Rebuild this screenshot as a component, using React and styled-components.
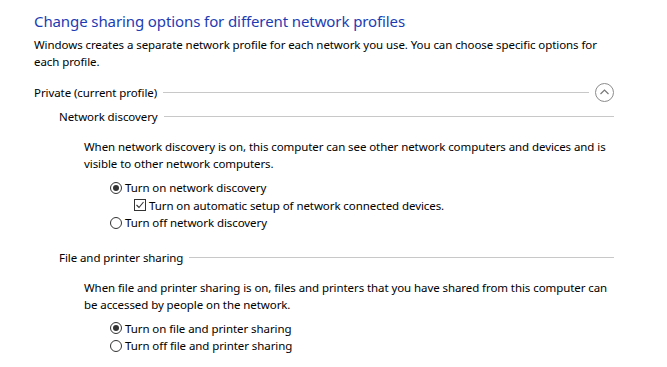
import React from "react";
import styled, { createGlobalStyle } from "styled-components";

const GlobalStyle = createGlobalStyle`
  html, body {
    margin: 0;
    padding: 0;
    background: #fff;
  }
  body {
    font-family: "Noto Sans", "Open Sans", sans-serif;
    font-size: 11.5px;
    letter-spacing: -0.08px;
    color: #000;
  }
`;

const Page = styled.div`
  width: 580px;
  padding: 10px 0 0 34px;
`;

const Title = styled.h1`
  margin: 0;
  font-size: 15px;
  letter-spacing: -0.1px;
  font-weight: normal;
  line-height: 22px;
  color: #1c3cb4;
`;

const Text = styled.p`
  margin: 0;
  padding: ${(p) => p.$pad || "0"};
  font-size: 11.5px;
  line-height: 17px;
`;

const SectionHeader = styled.div`
  display: flex;
  align-items: center;
  gap: 6px;
  height: 20px;
  margin: ${(p) => p.$margin || "0"};
  padding-left: ${(p) => p.$indent || 0}px;
`;

const Rule = styled.div`
  flex: 1;
  height: 1px;
  background: #c8c8c8;
`;

const Toggle = styled.button`
  width: 19px;
  height: 19px;
  padding: 0;
  border: 1px solid #8c8c8c;
  border-radius: 50%;
  background: #fff;
  display: flex;
  align-items: center;
  justify-content: center;
`;

const Body = styled.div`
  padding-left: 50px;
`;

const Options = styled.div`
  display: flex;
  flex-direction: column;
  padding: ${(p) => p.$pad || "0"};
`;

const Option = styled.label`
  display: flex;
  align-items: center;
  gap: 3px;
  height: 17.5px;
  padding-left: ${(p) => p.$indent || 0}px;
  font-size: 11.5px;
`;

const Radio = styled.span`
  box-sizing: border-box;
  width: 12px;
  height: 12px;
  border: 1px solid #333;
  border-radius: 50%;
  display: flex;
  align-items: center;
  justify-content: center;
  &::after {
    content: "";
    width: 6px;
    height: 6px;
    border-radius: 50%;
    background: ${(p) => (p.$checked ? "#333" : "transparent")};
  }
`;

const Check = styled.span`
  box-sizing: border-box;
  width: 12px;
  height: 12px;
  border: 1px solid #333;
  display: flex;
  align-items: center;
  justify-content: center;
`;

const Chevron = () => (
  <svg width="11" height="11" viewBox="0 0 11 11">
    <path d="M1.5 7 L5.5 3 L9.5 7" fill="none" stroke="#777" strokeWidth="1.2" />
  </svg>
);

const Tick = () => (
  <svg width="10" height="10" viewBox="0 0 10 10">
    <path d="M1.5 5 L4 7.5 L8.5 2" fill="none" stroke="#333" strokeWidth="1.1" />
  </svg>
);

export default function App() {
  return (
    <Page>
      <GlobalStyle />
      <Title>Change sharing options for different network profiles</Title>
      <Text $pad="4px 0 0 0">
        Windows creates a separate network profile for each network you use. You can choose specific options for each profile.
      </Text>

      <SectionHeader $margin="12px 0 0 0">
        <span>Private (current profile)</span>
        <Rule />
        <Toggle aria-label="collapse">
          <Chevron />
        </Toggle>
      </SectionHeader>

      <SectionHeader $indent={25} $margin="4px 0 0 0">
        <span>Network discovery</span>
        <Rule />
      </SectionHeader>
      <Body>
        <Text $pad="12px 0 0 0">
          When network discovery is on, this computer can see other network computers and devices and is visible to other network computers.
        </Text>
        <Options $pad="7px 0 0 26px">
          <Option>
            <Radio $checked />
            Turn on network discovery
          </Option>
          <Option $indent={24}>
            <Check>
              <Tick />
            </Check>
            Turn on automatic setup of network connected devices.
          </Option>
          <Option>
            <Radio />
            Turn off network discovery
          </Option>
        </Options>
      </Body>

      <SectionHeader $indent={25} $margin="16px 0 0 0">
        <span>File and printer sharing</span>
        <Rule />
      </SectionHeader>
      <Body>
        <Text $pad="11px 0 0 0">
          When file and printer sharing is on, files and printers that you have shared from this computer can be accessed by people on the network.
        </Text>
        <Options $pad="7px 0 0 26px">
          <Option>
            <Radio $checked />
            Turn on file and printer sharing
          </Option>
          <Option>
            <Radio />
            Turn off file and printer sharing
          </Option>
        </Options>
      </Body>
    </Page>
  );
}
